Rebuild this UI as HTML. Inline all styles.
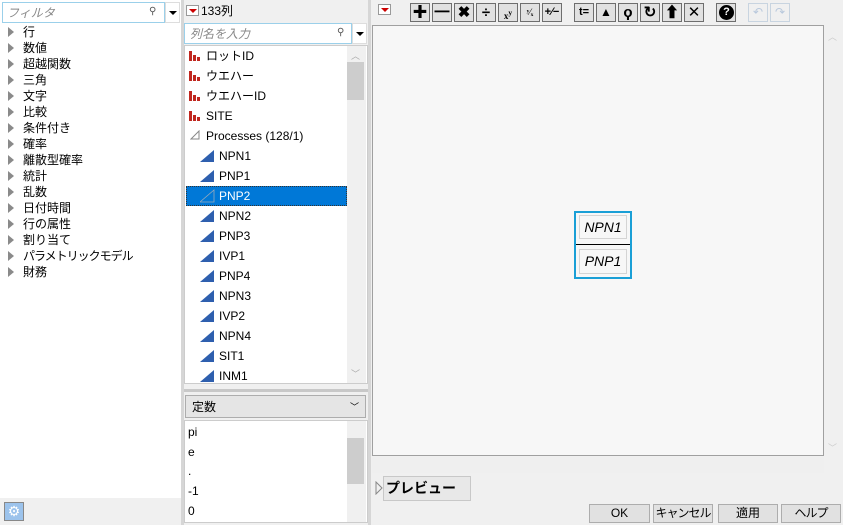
<!DOCTYPE html>
<html><head><meta charset="utf-8"><style>
*{box-sizing:border-box;margin:0;padding:0}
html,body{width:843px;height:525px;overflow:hidden}
body{background:#f0f0f0;font-family:"Liberation Sans","Noto Sans CJK JP",sans-serif;font-size:12px;line-height:16px;color:#000;position:relative}
.a{position:absolute;white-space:nowrap}
.tri{position:absolute;width:0;height:0;border-left:6px solid #8a8a8a;border-top:5px solid transparent;border-bottom:5px solid transparent}
.tb{position:absolute;top:3px;width:20px;height:19px;border:1px solid #6e6e6e;background:#e1e1e1;font-weight:bold;text-align:center;line-height:17px;font-size:15px;white-space:nowrap}
.btn{position:absolute;top:504px;height:19px;border:1px solid #adadad;background:#e1e1e1;text-align:center;line-height:17px;font-size:12px;white-space:nowrap;overflow:hidden;letter-spacing:-1px}
.it{position:absolute;left:219px;font-size:12px}
</style></head><body>
<div class="a" style="left:0;top:0;width:181px;height:525px;background:#fff"></div>
<div class="a" style="left:2px;top:2px;width:163px;height:21px;border:1px solid #9bd0ea;background:#fff;color:#888;font-style:italic;padding:2px 4px;font-size:12px">フィルタ</div>
<div class="a" style="left:149px;top:4px;font-size:10px;color:#555">⚲</div>
<div class="a" style="left:165px;top:2px;width:15px;height:21px;background:#fff;border:1px solid #ddd"><div class="a" style="left:3px;top:8px;border-left:4px solid transparent;border-right:4px solid transparent;border-top:4px solid #000"></div></div>
<div class="tri" style="left:8px;top:27px"></div><div class="a" style="left:23px;top:24px">行</div>
<div class="tri" style="left:8px;top:43px"></div><div class="a" style="left:23px;top:40px">数値</div>
<div class="tri" style="left:8px;top:59px"></div><div class="a" style="left:23px;top:56px">超越関数</div>
<div class="tri" style="left:8px;top:75px"></div><div class="a" style="left:23px;top:72px">三角</div>
<div class="tri" style="left:8px;top:91px"></div><div class="a" style="left:23px;top:88px">文字</div>
<div class="tri" style="left:8px;top:107px"></div><div class="a" style="left:23px;top:104px">比較</div>
<div class="tri" style="left:8px;top:123px"></div><div class="a" style="left:23px;top:120px">条件付き</div>
<div class="tri" style="left:8px;top:139px"></div><div class="a" style="left:23px;top:136px">確率</div>
<div class="tri" style="left:8px;top:155px"></div><div class="a" style="left:23px;top:152px">離散型確率</div>
<div class="tri" style="left:8px;top:171px"></div><div class="a" style="left:23px;top:168px">統計</div>
<div class="tri" style="left:8px;top:187px"></div><div class="a" style="left:23px;top:184px">乱数</div>
<div class="tri" style="left:8px;top:203px"></div><div class="a" style="left:23px;top:200px">日付時間</div>
<div class="tri" style="left:8px;top:219px"></div><div class="a" style="left:23px;top:216px">行の属性</div>
<div class="tri" style="left:8px;top:235px"></div><div class="a" style="left:23px;top:232px">割り当て</div>
<div class="tri" style="left:8px;top:251px"></div><div class="a" style="left:23px;top:248px;letter-spacing:-1px">パラメトリックモデル</div>
<div class="tri" style="left:8px;top:267px"></div><div class="a" style="left:23px;top:264px">財務</div>
<div class="a" style="left:0;top:498px;width:181px;height:27px;background:#f0f0f0"></div>
<div class="a" style="left:4px;top:502px;width:20px;height:19px;border:1px solid #888;background:#9cc3ec;color:#fff;text-align:center;line-height:17px;font-size:14px">⚙</div>
<div class="a" style="left:181px;top:0;width:3px;height:525px;background:#d6d6d6"></div>
<div class="a" style="left:186px;top:5px;width:13px;height:11px;border:1px solid #999;background:#fff"><div class="a" style="left:2px;top:3px;border-left:4px solid transparent;border-right:4px solid transparent;border-top:4px solid #c00"></div></div>
<div class="a" style="left:201px;top:3px;font-size:12px">133列</div>
<div class="a" style="left:184px;top:23px;width:168px;height:21px;border:1px solid #9bd0ea;background:#fff;color:#888;font-style:italic;padding:2px 5px">列名を入力</div>
<div class="a" style="left:337px;top:25px;font-size:10px;color:#555">⚲</div>
<div class="a" style="left:352px;top:23px;width:15px;height:21px;background:#fff;border:1px solid #ddd"><div class="a" style="left:3px;top:8px;border-left:4px solid transparent;border-right:4px solid transparent;border-top:4px solid #000"></div></div>
<div class="a" style="left:184px;top:45px;width:184px;height:339px;background:#fff;border:1px solid #ccc"></div>
<div class="a" style="left:347px;top:46px;width:19px;height:337px;background:#f0f0f0"></div>
<div class="a" style="left:347px;top:62px;width:17px;height:38px;background:#cdcdcd"></div>
<div class="a" style="left:351px;top:48px;color:#aaa;font-size:9px">︿</div>
<div class="a" style="left:351px;top:366px;color:#aaa;font-size:9px">﹀</div>
<div class="a" style="left:186px;top:186px;width:161px;height:20px;background:#0078d7;border:1px dotted #333"></div>
<svg class="a" style="left:188px;top:48px" width="14" height="80"><g fill="#c0271f"><rect x="1" y="3" width="3" height="10"/><rect x="5" y="7" width="3" height="6"/><rect x="9" y="9" width="3" height="4"/><rect x="1" y="23" width="3" height="10"/><rect x="5" y="27" width="3" height="6"/><rect x="9" y="29" width="3" height="4"/><rect x="1" y="43" width="3" height="10"/><rect x="5" y="47" width="3" height="6"/><rect x="9" y="49" width="3" height="4"/><rect x="1" y="63" width="3" height="10"/><rect x="5" y="67" width="3" height="6"/><rect x="9" y="69" width="3" height="4"/></g></svg>
<div class="a" style="left:206px;top:48px">ロットID</div>
<div class="a" style="left:206px;top:68px">ウエハー</div>
<div class="a" style="left:206px;top:88px">ウエハーID</div>
<div class="a" style="left:206px;top:108px">SITE</div>
<svg class="a" style="left:190px;top:130px" width="10" height="10"><path d="M1 9 L9 1 L9 9 Z" fill="none" stroke="#888"/></svg>
<div class="a" style="left:206px;top:128px">Processes (128/1)</div>
<svg class="a" style="left:200px;top:150px" width="16" height="240"><g fill="#2e5fae"><path d="M0 12L14 0L14 12Z"/><path d="M0 32L14 20L14 32Z"/><path d="M0 52L14 40L14 52Z" fill="none" stroke="#9ab" stroke-width="0.8"/><path d="M0 72L14 60L14 72Z"/><path d="M0 92L14 80L14 92Z"/><path d="M0 112L14 100L14 112Z"/><path d="M0 132L14 120L14 132Z"/><path d="M0 152L14 140L14 152Z"/><path d="M0 172L14 160L14 172Z"/><path d="M0 192L14 180L14 192Z"/><path d="M0 212L14 200L14 212Z"/><path d="M0 232L14 220L14 232Z"/></g></svg>
<div class="it" style="top:148px">NPN1</div>
<div class="it" style="top:168px">PNP1</div>
<div class="it" style="top:188px;color:#fff">PNP2</div>
<div class="it" style="top:208px">NPN2</div>
<div class="it" style="top:228px">PNP3</div>
<div class="it" style="top:248px">IVP1</div>
<div class="it" style="top:268px">PNP4</div>
<div class="it" style="top:288px">NPN3</div>
<div class="it" style="top:308px">IVP2</div>
<div class="it" style="top:328px">NPN4</div>
<div class="it" style="top:348px">SIT1</div>
<div class="it" style="top:368px">INM1</div>
<div class="a" style="left:184px;top:389px;width:184px;height:3px;background:#c8c8c8"></div>
<div class="a" style="left:185px;top:395px;width:181px;height:23px;border:1px solid #adadad;background:#e5e5e5;padding:3px 6px">定数<span style="position:absolute;right:6px;top:3px;font-size:9px">﹀</span></div>
<div class="a" style="left:184px;top:420px;width:184px;height:103px;background:#fff;border:1px solid #ccc"></div>
<div class="a" style="left:347px;top:421px;width:19px;height:101px;background:#f0f0f0"></div>
<div class="a" style="left:347px;top:438px;width:17px;height:46px;background:#cdcdcd"></div>
<div class="a" style="left:188px;top:423px;line-height:19.7px">pi<br>e<br>.<br>-1<br>0</div>
<div class="a" style="left:368px;top:0;width:3px;height:525px;background:#d6d6d6"></div>
<div class="a" style="left:378px;top:4px;width:13px;height:11px;border:1px solid #999;background:#fff"><div class="a" style="left:2px;top:3px;border-left:4px solid transparent;border-right:4px solid transparent;border-top:4px solid #c00"></div></div>
<div class="tb" style="left:410px">✚</div>
<div class="tb" style="left:432px">━</div>
<div class="tb" style="left:454px">✖</div>
<div class="tb" style="left:476px">÷</div>
<div class="tb" style="left:498px;font-size:9px;font-family:'Liberation Serif',serif">x<sup>y</sup></div>
<div class="tb" style="left:520px;font-size:9px;font-family:'Liberation Serif',serif">ʸ⁄ₓ</div>
<div class="tb" style="left:542px;font-size:11px">+⁄−</div>
<div class="tb" style="left:574px;font-size:11px">t=</div>
<div class="tb" style="left:596px;font-size:12px">▲</div>
<div class="tb" style="left:618px">ϙ</div>
<div class="tb" style="left:640px">↻</div>
<div class="tb" style="left:662px">⬆</div>
<div class="tb" style="left:684px;font-weight:normal">✕</div>
<div class="a" style="left:716px;top:3px;width:20px;height:19px;border:1px solid #6e6e6e;background:#e1e1e1"><div class="a" style="left:2px;top:1px;width:15px;height:15px;border-radius:50%;background:#000;color:#fff;font-weight:bold;font-size:11px;text-align:center;line-height:15px">?</div></div>
<div class="a" style="left:748px;top:3px;width:20px;height:19px;border:1px solid #c8d4e0;color:#b8c8dc;text-align:center;line-height:17px">↶</div>
<div class="a" style="left:770px;top:3px;width:20px;height:19px;border:1px solid #c8d4e0;color:#b8c8dc;text-align:center;line-height:17px">↷</div>
<div class="a" style="left:372px;top:25px;width:452px;height:431px;border:1px solid #a0a0a0;background:#f7f7f7"></div>
<div class="a" style="left:828px;top:29px;color:#ccc;font-size:9px">︿</div>
<div class="a" style="left:828px;top:440px;color:#ccc;font-size:9px">﹀</div>
<div class="a" style="left:372px;top:457px;width:452px;height:16px;background:#efefef"></div>
<div class="a" style="left:574px;top:211px;width:58px;height:68px;border:2px solid #1a9fd6;background:#f7f7f7"></div>
<div class="a" style="left:579px;top:215px;width:48px;height:24px;border:1px solid #d4d4d4;font-style:italic;font-size:14px;text-align:center;line-height:22px">NPN1</div>
<div class="a" style="left:576px;top:244px;width:54px;height:1px;background:#000"></div>
<div class="a" style="left:579px;top:249px;width:48px;height:25px;border:1px solid #d4d4d4;font-style:italic;font-size:14px;text-align:center;line-height:23px">PNP1</div>
<svg class="a" style="left:375px;top:481px" width="8" height="14"><path d="M1 1L7 7L1 13Z" fill="none" stroke="#888"/></svg>
<div class="a" style="left:383px;top:476px;width:88px;height:25px;border:1px solid #c8c8c8;background:#e8e8e8;font-weight:bold;font-size:14px;line-height:23px;padding-left:2px">プレビュー</div>
<div class="btn" style="left:589px;width:61px;letter-spacing:0">OK</div>
<div class="btn" style="left:653px;width:60px">キャンセル</div>
<div class="btn" style="left:718px;width:60px;letter-spacing:0">適用</div>
<div class="btn" style="left:781px;width:60px">ヘルプ</div>
</body></html>
